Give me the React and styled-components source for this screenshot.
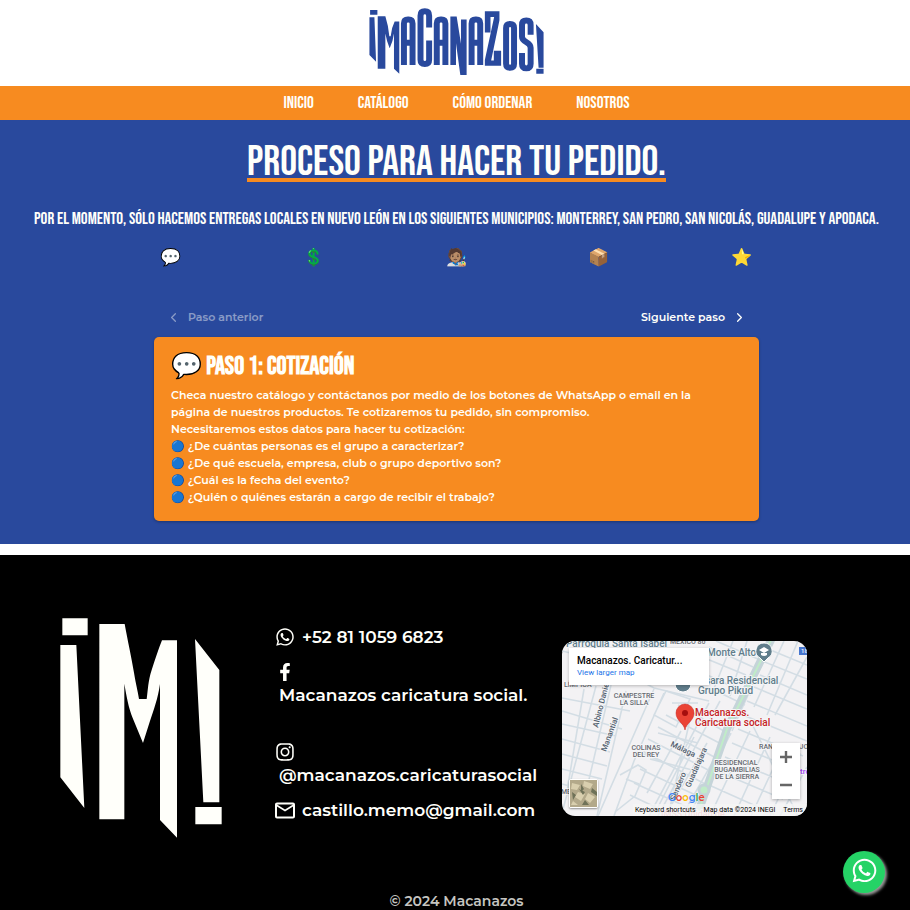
import React, { useState } from 'react';
import styled, { createGlobalStyle } from 'styled-components';
import { FaFacebookF, FaInstagram, FaWhatsapp } from 'react-icons/fa';
import { ChevronLeft, ChevronRight } from 'lucide-react';

const BLUE = '#29499d';
const ORANGE = '#f78b20';
const CREAM = '#fffffa';

const GlobalStyle = createGlobalStyle`
  *, *::before, *::after { box-sizing: border-box; }
  html { overflow-x: hidden; }
  body {
    margin: 0;
    background: #fff;
    color: ${CREAM};
    font-family: "Montserrat", "Noto Color Emoji", sans-serif;
    font-weight: 500;
  }
  h1, h2, p, ul { margin: 0; padding: 0; }
  a { color: inherit; text-decoration: none; }
  button { font: inherit; color: inherit; border: 0; background: none; padding: 0; cursor: pointer; }
`;

const Header = styled.header`
  display: flex;
  justify-content: center;
  padding: 8px 0 11px 3px;
  background: #fff;
`;

const HomeLink = styled.a`
  display: block;
  svg { display: block; }
`;

const Nav = styled.nav`
  display: flex;
  justify-content: center;
  gap: 44px;
  padding: 0 0 0 3px;
  background: ${ORANGE};
`;

const NavLink = styled.a`
  font: 400 17px/34px "Bebas Neue", sans-serif;
`;

const Main = styled.main`
  display: flex;
  flex-direction: column;
  align-items: center;
  padding: 25px 0 23px 3px;
  margin-bottom: 11px;
  background: ${BLUE};
`;

const Title = styled.h1`
  height: 37px;
  font: 400 42px/36px "Bebas Neue", sans-serif;
  border-bottom: 4px solid ${ORANGE};
`;

const Subtitle = styled.p`
  margin-top: 26px;
  padding: 0 16px;
  font: 400 17px/22px "Bebas Neue", sans-serif;
  text-align: center;
`;

const Steps = styled.div`
  display: grid;
  grid-template-columns: repeat(5, 1fr);
  width: 100%;
  max-width: 714px;
  margin-top: 15px;
`;

const StepButton = styled.button`
  font-size: 17px;
  line-height: 24px;
`;

const Panel = styled.section`
  width: 100%;
  max-width: 605px;
  margin-top: 37px;
`;

const Pager = styled.div`
  display: flex;
  justify-content: space-between;
  padding: 0 12px;
`;

const PagerButton = styled.button`
  display: flex;
  align-items: center;
  gap: 7px;
  font-size: 11px;
  font-weight: 600;
  line-height: 22px;
  &:disabled { opacity: 0.45; cursor: default; }
`;

const Card = styled.article`
  margin-top: 9px;
  padding: 12px 17px 15px;
  border-radius: 5px;
  background: ${ORANGE};
  box-shadow: 0 1px 3px rgba(0, 0, 0, 0.3);
`;

const CardTitle = styled.h2`
  font: 700 25px/35px "Bebas Neue", "Noto Color Emoji", sans-serif;
`;

const CardText = styled.p`
  max-width: 550px;
  margin-top: 3px;
  font-size: 11px;
  font-weight: 600;
  line-height: 17px;
`;

const QuestionList = styled.ul`
  list-style: none;
  font-size: 11px;
  font-weight: 600;
  line-height: 17px;
`;

const Footer = styled.footer`
  padding: 63px 60px 0;
  background: #000;
`;

const FooterColumns = styled.div`
  display: flex;
  align-items: center;
  svg { flex-shrink: 0; }
`;

const Contacts = styled.address`
  display: flex;
  flex-direction: column;
  gap: 11px;
  width: 340px;
  padding: 0 0 9px 53px;
  font-size: 17px;
  font-style: normal;
  font-weight: 600;
  line-height: 24px;
`;

const ContactLink = styled.a`
  display: flex;
  align-items: center;
  gap: 7px;
`;

const StackedLink = styled.a`
  display: block;
  margin-bottom: ${p => (p.$spaced ? '22px' : '0')};
`;

const IconLine = styled.span`
  display: flex;
  align-items: center;
  justify-content: center;
  width: 20px;
  height: 23px;
`;

const StackedLabel = styled.span`
  display: block;
  padding-left: 4px;
`;

const MapFrame = styled.div`
  position: relative;
  flex: 0 0 245px;
  height: 175px;
  overflow: hidden;
  border-radius: 13px;
  background: #f3f2f4;
  color: #000;
  font-family: Roboto, sans-serif;
`;

const MapInfo = styled.div`
  position: absolute;
  top: 7px;
  left: 7px;
  width: 140px;
  padding: 7px 8px 6px;
  background: #fff;
  box-shadow: 0 1px 3px rgba(0, 0, 0, 0.25);
  line-height: 12px;
`;

const MapName = styled.div`
  font-size: 10px;
  font-weight: 500;
`;

const MapLink = styled.a`
  display: block;
  color: #1a73e8;
  font-size: 8px;
  font-weight: 400;
`;

const ZoomControls = styled.div`
  position: absolute;
  right: 7px;
  bottom: 17px;
  display: flex;
  flex-direction: column;
  width: 28px;
  background: #fff;
  box-shadow: 0 1px 3px rgba(0, 0, 0, 0.3);
`;

const ZoomButton = styled.button`
  height: 28px;
  svg { display: block; margin: auto; }
`;

const LayerButton = styled.button`
  position: absolute;
  left: 7px;
  bottom: 8px;
  border: 1px solid #fff;
  border-radius: 2px;
  box-shadow: 0 1px 2px rgba(0, 0, 0, 0.4);
  svg { display: block; }
`;

const MapTerms = styled.div`
  position: absolute;
  right: 0;
  bottom: 0;
  display: flex;
  gap: 8px;
  padding: 0 4px 0 2px;
  background: rgba(245, 245, 245, 0.75);
  font-size: 7px;
  font-weight: 400;
  line-height: 12px;
  white-space: nowrap;
`;

const Copyright = styled.p`
  padding: 52px 0 11px 3px;
  color: #c5c5c1;
  font-size: 14px;
  font-weight: 600;
  line-height: 22px;
  text-align: center;
`;

const ChatButton = styled.a`
  position: fixed;
  right: 25px;
  bottom: 17px;
  display: flex;
  align-items: center;
  justify-content: center;
  width: 42px;
  height: 42px;
  padding-bottom: 3px;
  border-radius: 50%;
  background: #25d366;
  color: #fff;
  box-shadow: 2px 2px 3px #999;
`;

function Wordmark() {
  return (
    <svg width="175" height="67" viewBox="27 23 525 202" fill={BLUE} role="img" aria-label="¡Macanazos!">
      <path d="M29 29h22v14H29zM27 51h15l5 134-20-20z" />
      <path d="M52 48h23q9 28 12 60h4q2-24 12-44h14v157l-16-15V100q-3 24-13 44-9-20-13-44v106H52z" />
      <g fill="none" stroke={BLUE} strokeWidth="18">
        <path d="M131 195V70q0-12 12-12h2q12 0 12 12v125M131 128h26" />
        <path d="M207 82V46q0-13-13-13t-13 13v133q0 13 13 13t13-13v-58" />
        <path d="M230 195V70q0-12 12-12h2q12 0 12 12v125M230 128h26M335 195V70q0-12 12-12h2q12 0 12 12v125M335 128h26" />
        <path d="M451 71q-12 0-12 12v108q0 12 12 12t12-12V83q0-12-12-12z" />
        <path d="M513 104V74q0-13-13-13t-13 13v36q0 9 13 16t13 17v48q0 14-13 14t-13-14v-32" />
      </g>
      <path d="M271 49h19l13 82V58h17v167h-19l-13-96v66h-17zM375 33h44v27l-25 121h8v-29h22v45h-49v-17l28-130h-11v47h-17z" />
      <path d="M529 71l23 25v107h-15zM530 206h22v15h-22z" />
    </svg>
  );
}

function Emblem() {
  return (
    <svg width="162" height="220" viewBox="30 40 486 660" fill={CREAM} role="img" aria-label="¡M!">
      <path d="M37 41h76v51H37zM31 121h48l24 489-72-92z" />
      <path d="M148 58h76c8 44 21 104 28 146 6 36 11 52 15 79h23c4-26 4-54 15-87 10-30 20-62 31-89h45v592l-51-53V238c-6 43-19 78-31 114l-20 63-31-75c-12-29-19-67-25-103v407h-75z" />
      <path d="M435 103l73 93v397h-48zM436 607h79v52h-79z" />
    </svg>
  );
}

function MailIcon() {
  return (
    <svg width="20" height="17" viewBox="2 4 20 16" fill="currentColor" aria-hidden="true">
      <path d="M22 6c0-1.1-.9-2-2-2H4c-1.1 0-2 .9-2 2v12c0 1.1.9 2 2 2h16c1.1 0 2-.9 2-2V6zm-2 0l-8 5-8-5h16zm0 12H4V8l8 5 8-5v10z" />
    </svg>
  );
}

function StreetMap() {
  return (
    <svg width="245" height="175" viewBox="0 0 245 175" fontFamily="Roboto, sans-serif" aria-hidden="true">
      <g fill="none" stroke="#d3dde4" strokeWidth="1.6">
        <path d="M0 10L42 20 92 47 147 60M0 57L68 70M0 70L60 88M0 83l54 12M0 98l48 13M0 113l45 12M0 128l40 10M0 143l34 9M22 48L5 150M34 45L0 172M49 44L22 160M64 50L35 175" />
        <path d="M92 48L36 175M102 52l-30 68-20 55M110 62h26M92 74l12-24 24 8-14 28zM96 92l40 10M88 118l46 12M58 134l18-10 8 5-11 26-20 16M64 138l13 5M78 112l22 8" />
        <path d="M147 62l-60 113M158 60L96 175M130 70l-24 105M80 110l69 36M86 98l66 34M96 86l60 32M104 74l59 31M116 64l53 30M78 128l64 30M72 142l62 28M68 154l42 20M119 90l-34 62M132 96l-38 74M145 102l-42 73M158 108l-38 67M169 92l-42 83" />
        <path d="M147 6l44 20M145 18l39 16M154 0l42 18M145 34l44 20M150 48l33 16M171 0l-20 50M185 0l-17 55M210 0l-40 90M222 0l-30 66M236 0l-31 74M245 16l-32 58M206 8l39 16M200 20l45 18M198 34l47 20M192 46l53 22M185 60l60 25M181 74l64 26M176 88l65 27M170 102l66 28M163 116l66 28M155 130l66 28M147 144l65 29M188 90l-40 85M208 96l-36 79M222 104l-33 71M238 112l-30 63M191 85l45 90M245 126l-27 49" />
      </g>
      <path d="M210-3L165 88 135 175" fill="none" stroke="#c5d4d9" strokeWidth="8" />
      <path d="M210-3L165 88 135 175" fill="none" stroke="#c0ecc8" strokeWidth="2" />
      <circle cx="142" cy="149" r="5" fill="#c0ecc8" stroke="#c5d4d9" strokeWidth="3" />
      <g paintOrder="stroke" stroke="#f5f5f7" strokeWidth="2" strokeLinejoin="round">
        <g fill="#607d8b" fontSize="10">
          <text x="4" y="6">Parroquia Santa Isabel</text>
          <text x="145" y="15">Monte Alto</text>
          <text x="143" y="43">sara Residencial</text>
          <text x="136" y="53">Grupo Pikud</text>
        </g>
        <g fill="#666a70" fontSize="7">
          <text x="108" y="3">MÉXICO 86</text>
          <text x="2" y="46">LÍMPICA</text>
          <text x="72" y="57" textAnchor="middle">CAMPESTRE</text>
          <text x="72" y="64" textAnchor="middle">LA SILLA</text>
          <text x="84" y="109" textAnchor="middle">COLINAS</text>
          <text x="84" y="116" textAnchor="middle">DEL REY</text>
          <text x="174" y="124" textAnchor="middle">RESIDENCIAL</text>
          <text x="175" y="131" textAnchor="middle">BUGAMBILIAS</text>
          <text x="175" y="138" textAnchor="middle">DE LA SIERRA</text>
          <text x="197" y="108">RANCHO VIEJO</text>
          <text x="-1" y="153">ME</text>
        </g>
        <g fill="#52606e" fontSize="8">
          <text transform="translate(36 87) rotate(-76)">Albino Daniel</text>
          <text transform="translate(44 111) rotate(-70)">Manantial</text>
          <text transform="translate(108 105) rotate(25)">Málaga</text>
          <text transform="translate(128 147) rotate(-66)">Guadalajara</text>
          <text transform="translate(113 160) rotate(-68)">Sendero</text>
        </g>
        <g fill="#c5221f" fontSize="10">
          <text x="133" y="75">Macanazos.</text>
          <text x="133" y="85">Caricatura social</text>
        </g>
        <text x="238" y="133" fill="#a142f4" fontSize="8">tro</text>
        <text x="99" y="176" fill="#ef9a9a" fontSize="9">IMSS Unidad de</text>
      </g>
      <g fill="#607d8b" stroke="#fff" strokeWidth="1">
        <path d="M202 2a8 8 0 0 1 4 15l-4 4-4-4a8 8 0 0 1 4-15z" />
        <circle cx="121" cy="43" r="8" />
      </g>
      <path d="M197 9l5-3 5 3-5 3zM199 12v2q3 2 6 0v-2" fill="#fff" />
      <rect x="237" y="6" width="8" height="8" fill="#4676cf" />
      <text x="239" y="12" fill="#fff" fontSize="6">18</text>
      <path d="M123 89c-1-7-9-9-9-17a9 9 0 0 1 18 0c0 8-8 10-9 17z" fill="#ea4335" stroke="#c5221f" strokeWidth="0.5" />
      <circle cx="123" cy="72" r="3" fill="#a50e0e" />
      <text x="106" y="160" fontFamily="Montserrat, sans-serif" fontSize="10" fontWeight="600" fill="#4285f4">
        G<tspan fill="#ea4335">o</tspan><tspan fill="#fbbc04">o</tspan>g<tspan fill="#34a853">l</tspan><tspan fill="#ea4335">e</tspan>
      </text>
    </svg>
  );
}

function LocationMap() {
  return (
    <MapFrame>
      <StreetMap />
      <MapInfo>
        <MapName>Macanazos. Caricatur...</MapName>
        <MapLink href="#mapa">View larger map</MapLink>
      </MapInfo>
      <LayerButton aria-label="Satellite">
        <svg width="27" height="27" viewBox="0 0 27 27">
          <path fill="#b3a98a" d="M0 0h27v27H0z" />
          <path fill="#d9cfae" d="M2 3l8 2-3 5-6-1zM14 1l9 3-3 5-7-3zM8 12l7 2-4 7-6-4zM18 13l7 4-5 6-5-4zM3 21l5 4H1z" />
          <path fill="#6f7258" d="M11 4l3 5-3 3zM22 8l5 4v4l-6-4zM2 12l4 3-3 5zM15 20l4 5h-7zM9 9l6 3-2 3z" />
        </svg>
      </LayerButton>
      <ZoomControls>
        <ZoomButton aria-label="Zoom in">
          <svg width="14" height="14" viewBox="0 0 14 14"><path d="M7 1v12M1 7h12" stroke="#666" strokeWidth="2.4" /></svg>
        </ZoomButton>
        <ZoomButton aria-label="Zoom out">
          <svg width="14" height="14" viewBox="0 0 14 14"><path d="M1 7h12" stroke="#666" strokeWidth="2.4" /></svg>
        </ZoomButton>
      </ZoomControls>
      <MapTerms>
        <a href="#atajos">Keyboard shortcuts</a>
        <span>Map data ©2024 INEGI</span>
        <a href="#terminos">Terms</a>
      </MapTerms>
    </MapFrame>
  );
}

const navItems = ['Inicio', 'Catálogo', 'Cómo ordenar', 'Nosotros'];
const steps = [
  { icon: '💬', name: 'Cotización' },
  { icon: '💲', name: 'Anticipo' },
  { icon: '🧑🏽‍🎨', name: 'Dibujo' },
  { icon: '📦', name: 'Entrega' },
  { icon: '⭐', name: 'Opinión' },
];
const questions = [
  '¿De cuántas personas es el grupo a caracterizar?',
  '¿De qué escuela, empresa, club o grupo deportivo son?',
  '¿Cuál es la fecha del evento?',
  '¿Quién o quiénes estarán a cargo de recibir el trabajo?',
];

export default function App() {
  const [step, setStep] = useState(0);
  return (
    <>
      <GlobalStyle />
      <Header>
        <HomeLink href="#inicio"><Wordmark /></HomeLink>
      </Header>
      <Nav>
        {navItems.map(item => <NavLink key={item} href="#">{item}</NavLink>)}
      </Nav>
      <Main>
        <Title>Proceso para hacer tu pedido.</Title>
        <Subtitle>
          Por el momento, sólo hacemos entregas locales en Nuevo León en los siguientes municipios: Monterrey, San Pedro, San Nicolás, Guadalupe y Apodaca.
        </Subtitle>
        <Steps>
          {steps.map((s, i) => (
            <StepButton key={s.name} aria-label={s.name} onClick={() => setStep(i)}>{s.icon}</StepButton>
          ))}
        </Steps>
        <Panel>
          <Pager>
            <PagerButton disabled={step === 0} onClick={() => setStep(step - 1)}>
              <ChevronLeft size={15} />Paso anterior
            </PagerButton>
            <PagerButton disabled={step === 4} onClick={() => setStep(step + 1)}>
              Siguiente paso<ChevronRight size={15} />
            </PagerButton>
          </Pager>
          <Card>
            <CardTitle>{steps[step].icon} Paso {step + 1}: {steps[step].name}</CardTitle>
            {step === 0 && (
              <>
                <CardText>
                  Checa nuestro catálogo y contáctanos por medio de los botones de WhatsApp o email en la página de nuestros productos. Te cotizaremos tu pedido, sin compromiso.
                  <br />
                  Necesitaremos estos datos para hacer tu cotización:
                </CardText>
                <QuestionList>
                  {questions.map(q => <li key={q}>🔵 {q}</li>)}
                </QuestionList>
              </>
            )}
          </Card>
        </Panel>
      </Main>
      <Footer>
        <FooterColumns>
          <Emblem />
          <Contacts>
            <ContactLink href="tel:+528110596823"><FaWhatsapp size={20} />+52 81 1059 6823</ContactLink>
            <StackedLink href="#facebook" $spaced>
              <IconLine><FaFacebookF size={18} /></IconLine>
              <StackedLabel>Macanazos caricatura social.</StackedLabel>
            </StackedLink>
            <StackedLink href="#instagram">
              <IconLine><FaInstagram size={20} /></IconLine>
              <StackedLabel>@macanazos.caricaturasocial</StackedLabel>
            </StackedLink>
            <ContactLink href="mailto:castillo.memo@gmail.com"><MailIcon />castillo.memo@gmail.com</ContactLink>
          </Contacts>
          <LocationMap />
        </FooterColumns>
        <Copyright>© 2024 Macanazos</Copyright>
      </Footer>
      <ChatButton href="#whatsapp" aria-label="WhatsApp"><FaWhatsapp size={27} /></ChatButton>
    </>
  );
}
